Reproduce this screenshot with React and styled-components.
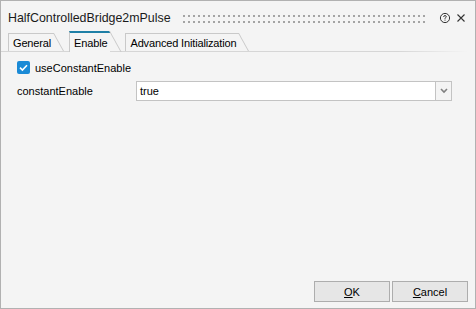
import React from 'react';
import styled, { createGlobalStyle } from 'styled-components';

const GlobalStyle = createGlobalStyle`
  html, body {
    margin: 0;
    padding: 0;
    background: #ffffff;
  }
  body {
    font-family: "Liberation Sans", Arial, sans-serif;
    font-size: 11px;
    color: #000;
  }
`;

function HelpIcon() {
  return (
    <svg width="12" height="12" viewBox="0 0 12 12">
      <circle cx="6" cy="6" r="4.6" fill="none" stroke="#333" strokeWidth="1" />
      <path d="M4.6 4.9 Q4.7 3.6 6 3.6 Q7.3 3.6 7.3 4.7 Q7.3 5.4 6.4 5.8 Q6 6 6 6.8" fill="none" stroke="#333" strokeWidth="1" />
      <rect x="5.5" y="7.6" width="1" height="1" fill="#333" />
    </svg>
  );
}

function CloseIcon() {
  return (
    <svg width="10" height="10" viewBox="0 0 10 10">
      <path d="M1.5 1.5 L8.5 8.5 M8.5 1.5 L1.5 8.5" stroke="#333" strokeWidth="1.1" />
    </svg>
  );
}

function CheckIcon() {
  return (
    <svg width="13" height="13" viewBox="0 0 13 13">
      <path d="M3 6.6 L5.4 9 L10 4.2" fill="none" stroke="#fff" strokeWidth="1.6" />
    </svg>
  );
}

function ChevronIcon() {
  return (
    <svg width="8" height="6" viewBox="0 0 8 6">
      <path d="M1 1 L4 4 L7 1" fill="none" stroke="#808080" strokeWidth="1.6" />
    </svg>
  );
}

export default function App() {
  return (
    <>
      <GlobalStyle />
      <Window>
        <TitleBar>
          <Title>HalfControlledBridge2mPulse</Title>
          <Grip />
          <TitleButton>
            <HelpIcon />
          </TitleButton>
          <TitleButton>
            <CloseIcon />
          </TitleButton>
        </TitleBar>

        <TabStrip>
          <Tab>General</Tab>
          <Tab $active>Enable</Tab>
          <Tab>Advanced Initialization</Tab>
        </TabStrip>

        <Content>
          <CheckRow>
            <CheckBox>
              <CheckIcon />
            </CheckBox>
            <CheckLabel>useConstantEnable</CheckLabel>
          </CheckRow>
          <FieldRow>
            <FieldLabel>constantEnable</FieldLabel>
            <Combo>
              <ComboValue>true</ComboValue>
              <ComboButton>
                <ChevronIcon />
              </ComboButton>
            </Combo>
          </FieldRow>
        </Content>

        <Footer>
          <DialogButton>
            <u>O</u>K
          </DialogButton>
          <DialogButton>
            <u>C</u>ancel
          </DialogButton>
        </Footer>
      </Window>
    </>
  );
}

const Window = styled.div`
  box-sizing: border-box;
  width: 476px;
  height: 309px;
  border: 1px solid #b1b1b1;
  background: #f4f4f4;
  display: flex;
  flex-direction: column;
`;

const TitleBar = styled.div`
  box-sizing: border-box;
  height: 30px;
  padding: 4px 8px 0 7px;
  display: flex;
  align-items: center;
`;

const Title = styled.div`
  font-size: 12.4px;
  color: #1a1a1a;
  white-space: nowrap;
`;

const Grip = styled.div`
  flex: 1;
  height: 8px;
  margin: 1px 8px 0 12px;
  background-image: linear-gradient(90deg, #a4a4a4 40%, transparent 40%),
    linear-gradient(90deg, #a4a4a4 40%, transparent 40%);
  background-size: 5px 2px;
  background-position: 0 0, 0 6px;
  background-repeat: repeat-x;
`;

const TitleButton = styled.div`
  width: 12px;
  height: 12px;
  margin-left: 4px;
  display: flex;
  align-items: center;
  justify-content: center;
`;

const TabStrip = styled.div`
  height: 20px;
  display: flex;
  align-items: flex-end;
  padding-left: 7px;
  margin-right: 8px;
  border-bottom: 1px solid;
  border-image: linear-gradient(90deg, #d6d6d6 85%, rgba(214, 214, 214, 0)) 1;
`;

const Tab = styled.div`
  position: relative;
  box-sizing: border-box;
  height: ${({ $active }) => ($active ? '21px' : '18px')};
  margin-bottom: ${({ $active }) => ($active ? '-1px' : '0')};
  margin-right: 15px;
  padding: 0 3px 0 4px;
  display: flex;
  align-items: center;
  padding-top: ${({ $active }) => ($active ? '0' : '1px')};
  border-left: 1px solid #c9c9c9;
  border-top: ${({ $active }) => ($active ? '2px solid #1e7fa6' : '1px solid #c9c9c9')};
  background: #f4f4f4;
  color: #000;
  white-space: nowrap;
  letter-spacing: -0.15px;

  &::after {
    content: '';
    position: absolute;
    top: ${({ $active }) => ($active ? '-2px' : '-1px')};
    right: 0;
    bottom: 0;
    width: 0;
    border-left: 1px solid #c9c9c9;
    transform: skewX(29deg);
    transform-origin: top left;
  }
`;

const Content = styled.div`
  flex: 1;
  padding: 9px 0 0 15px;
  display: flex;
  flex-direction: column;
  gap: 7px;
`;

const CheckRow = styled.div`
  display: flex;
  align-items: center;
  height: 13px;
  padding-left: 1px;
`;

const CheckBox = styled.div`
  width: 13px;
  height: 13px;
  border-radius: 2px;
  background: #1a8ad6;
  display: flex;
  align-items: center;
  justify-content: center;
`;

const CheckLabel = styled.span`
  margin-left: 5px;
`;

const FieldRow = styled.div`
  display: flex;
  align-items: center;
  height: 20px;
`;

const FieldLabel = styled.span`
  box-sizing: border-box;
  width: 120px;
  padding-left: 1px;
`;

const Combo = styled.div`
  display: flex;
  height: 20px;
`;

const ComboValue = styled.div`
  box-sizing: border-box;
  width: 300px;
  height: 20px;
  border: 1px solid #c3c3c3;
  background: #fff;
  padding-left: 3px;
  display: flex;
  align-items: center;
`;

const ComboButton = styled.div`
  box-sizing: border-box;
  width: 16px;
  height: 20px;
  border: 1px solid #c3c3c3;
  border-left: none;
  background: #f4f4f4;
  display: flex;
  align-items: center;
  justify-content: center;
`;

const Footer = styled.div`
  display: flex;
  justify-content: flex-end;
  gap: 2px;
  padding: 0 7px 6px 0;
`;

const DialogButton = styled.button`
  box-sizing: border-box;
  width: 76px;
  height: 21px;
  border: 1px solid #adadad;
  background: #e6e6e6;
  font-family: "Liberation Sans", Arial, sans-serif;
  font-size: 11px;
  color: #000;
  padding: 0;
`;
